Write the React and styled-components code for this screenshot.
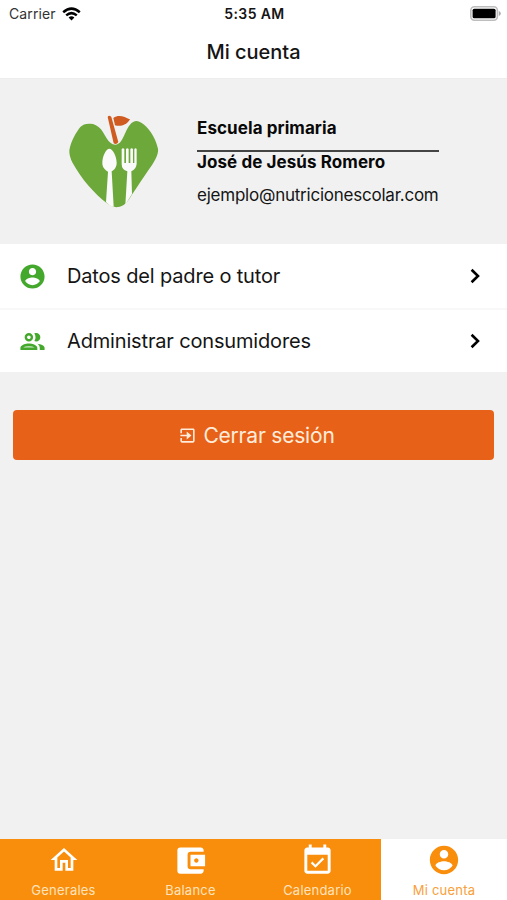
import React, { useState } from 'react';
import styled, { createGlobalStyle } from 'styled-components';
import { MdAccountBalanceWallet } from 'react-icons/md';

const GlobalStyle = createGlobalStyle`
    * {
        box-sizing: border-box;
    }

    body {
        margin: 0;
        background-color: #f1f1f1;
        font-family: Inter, "Liberation Sans", sans-serif;
        color: #151515;
    }

    button {
        border: none;
        padding: 0;
        font-family: inherit;
        color: inherit;
    }

    svg {
        display: block;
        flex-shrink: 0;
    }
`

const StyledScreen = styled.div`
    width: 507px;
    height: 900px;
    display: flex;
    flex-direction: column;
    overflow: hidden;
`

const StyledHeader = styled.header`
    height: 79px;
    background-color: white;
    border-bottom: 1px solid #ededed;
`

const StyledStatusBar = styled.div`
    height: 27px;
    padding: 0 6px 0 9px;
    display: grid;
    grid-template-columns: 1fr auto 1fr;
    align-items: center;
`

const StyledCarrier = styled.div`
    display: flex;
    align-items: center;
    gap: 6px;
    font-size: 14px;
    letter-spacing: 0.1px;
    color: #333;
`

const StyledTime = styled.div`
    padding-right: 1px;
    font-size: 14px;
    font-weight: 600;
    letter-spacing: 0.4px;
`

const StyledBattery = styled.div`
    justify-self: end;
`

const StyledTitle = styled.h1`
    margin: 0;
    line-height: 50px;
    text-align: center;
    font-size: 20px;
    font-weight: 500;
    letter-spacing: 0;
`

const StyledProfile = styled.section`
    height: 165px;
    padding: 34px 68px 0;
    display: flex;
    gap: 37px;
`

const StyledProfileInfo = styled.div`
    width: 242px;
    padding-top: 3px;
`

const StyledSchool = styled.div`
    height: 36px;
    line-height: 24px;
    border-bottom: 2px solid #444;
    font-size: 17px;
    font-weight: 700;
    letter-spacing: 0.08px;
    color: #080808;
    white-space: nowrap;
`

const StyledName = styled.div`
    line-height: 20px;
    font-size: 17px;
    font-weight: 700;
    letter-spacing: 0.08px;
    color: #080808;
    white-space: nowrap;
`

const StyledEmail = styled.div`
    margin-top: 12px;
    line-height: 22px;
    font-size: 17px;
    letter-spacing: -0.23px;
    white-space: nowrap;
`

const StyledRow = styled.button`
    width: 100%;
    height: 64px;
    padding: 0 18px 0 18px;
    display: flex;
    align-items: center;
    background-color: white;
    text-align: left;
    font-size: 20px;

    & + & {
        border-top: 2px solid #f8f8f8;
    }
`

const StyledRowIcon = styled.span`
    width: 49px;
    color: #43a82c;
`

const StyledRowLabel = styled.span`
    flex: 1;
    letter-spacing: -0.16px;
`

const StyledLogout = styled.button`
    height: 50px;
    margin: 38px 13px 0;
    padding: 1px 0 0 6px;
    display: flex;
    align-items: center;
    justify-content: center;
    gap: 6px;
    border-radius: 4px;
    background-color: #e76218;
    color: #ffecda;
    font-size: 21px;
    letter-spacing: -0.2px;
`

const StyledTabs = styled.nav`
    height: 61px;
    margin-top: auto;
    display: grid;
    grid-template-columns: 127px 127px 127px 126px;
`

const StyledTab = styled.button`
    display: flex;
    flex-direction: column;
    align-items: center;
    background-color: ${({ $active }) => ($active ? 'white' : '#f98e0c')};
    color: ${({ $active }) => ($active ? '#f98e0c' : 'white')};
`

const StyledTabIcon = styled.span`
    height: 42px;
    display: flex;
    align-items: center;
`

const StyledTabLabel = styled.span`
    line-height: 18px;
    font-size: 13px;
    letter-spacing: 0.22px;
    color: ${({ $active }) => ($active ? '#f9a03b' : '#ffe3bd')};
`

function Glyph({ size, children }) {
    return (
        <svg width={size} height={size} viewBox="0 0 24 24" fill="currentColor">
            {children}
        </svg>
    );
}

function AccountIcon({ size }) {
    return (
        <Glyph size={size}>
            <path d="M12 2C6.48 2 2 6.48 2 12s4.48 10 10 10 10-4.48 10-10S17.52 2 12 2zm0 3c1.66 0 3 1.34 3 3s-1.34 3-3 3-3-1.34-3-3 1.34-3 3-3zm0 14.2c-2.5 0-4.71-1.28-6-3.22.03-1.99 4-3.08 6-3.08 1.99 0 5.97 1.09 6 3.08-1.29 1.94-3.5 3.22-6 3.22z" />
        </Glyph>
    );
}

function PeopleIcon({ size }) {
    return (
        <Glyph size={size}>
            <path opacity=".4" d="M4.34 17h9.32c-.84-.58-2.87-1.25-4.66-1.25s-3.82.67-4.66 1.25z" />
            <path d="M9 13.75c-2.34 0-7 1.17-7 3.5V19h14v-1.75c0-2.33-4.66-3.5-7-3.5zM4.34 17c.84-.58 2.87-1.25 4.66-1.25s3.82.67 4.66 1.25H4.34zM9 12c1.93 0 3.5-1.57 3.5-3.5S10.93 5 9 5 5.5 6.57 5.5 8.5 7.07 12 9 12zm0-5c.83 0 1.5.67 1.5 1.5S9.83 10 9 10s-1.5-.67-1.5-1.5S8.17 7 9 7zm7.04 6.81c1.16.84 1.96 1.96 1.96 3.44V19h4v-1.75c0-2.02-3.5-3.17-5.96-3.44zM15 12c1.93 0 3.5-1.57 3.5-3.5S16.93 5 15 5c-.54 0-1.04.13-1.5.35.63.89 1 1.98 1 3.15s-.37 2.26-1 3.15c.46.22.96.35 1.5.35z" />
        </Glyph>
    );
}

function ChevronIcon() {
    return (
        <svg width="28" height="28" viewBox="0 0 28 28" fill="none" stroke="#000" strokeWidth="2.6">
            <path d="M10.6 7.7L17 14L10.6 20.3" />
        </svg>
    );
}

function ExitIcon({ size }) {
    return (
        <Glyph size={size}>
            <path d="M11 17l6-5-6-5v4H3v2h8v4zM19 3H5c-1.11 0-2 .9-2 2v4h2V5h14v14H5v-4H3v4c0 1.1.89 2 2 2h14c1.1 0 2-.9 2-2V5c0-1.1-.9-2-2-2z" />
        </Glyph>
    );
}

function HomeIcon({ size }) {
    return (
        <Glyph size={size}>
            <path d="M12 5.69l5 4.5V18h-2v-6H9v6H7v-7.81l5-4.5M12 3L2 12h3v8h6v-6h2v6h6v-8h3L12 3z" />
        </Glyph>
    );
}

function CalendarIcon({ size }) {
    return (
        <Glyph size={size}>
            <path d="M16.53 11.06L15.47 10l-4.88 4.88-2.12-2.12-1.06 1.06L10.59 17l5.94-5.94zM19 3h-1V1h-2v2H8V1H6v2H5c-1.11 0-1.99.9-1.99 2L3 19c0 1.1.89 2 2 2h14c1.1 0 2-.9 2-2V5c0-1.1-.9-2-2-2zm0 16H5V8h14v11z" />
        </Glyph>
    );
}

function WifiIcon() {
    return (
        <svg width="19" height="14" viewBox="0 0 19 14" fill="none" stroke="#000" strokeWidth="2.5">
            <path d="M1.2 5.2Q9.5 -2 17.8 5.2" />
            <path d="M4.2 8.4Q9.5 3.9 14.8 8.4" />
            <path d="M6.6 10.4Q9.5 8.2 12.4 10.4L9.5 13.6Z" fill="#000" stroke="none" />
        </svg>
    );
}

function BatteryIcon() {
    return (
        <svg width="31" height="15" viewBox="0 0 31 15">
            <rect x="0.8" y="0.8" width="26.6" height="13.4" rx="3.6" fill="#fff" stroke="#bdbdbd" strokeWidth="1.6" />
            <rect x="2.6" y="2.7" width="23" height="9.6" rx="1.6" fill="#000" />
            <path d="M28.8 5q2 .6 2 2.5t-2 2.5z" fill="#aaa" />
        </svg>
    );
}

function SchoolLogo() {
    return (
        <svg width="92" height="96" viewBox="25 24 276 288">
            <path d="M29 136C34 106 50 82 62 66Q72 55 91 56Q110 56 124 73C137 89 146 119 167 119C190 118 194 78 211 59Q226 41 245 53C265 66 286 92 295 131C298 148 282 174 266 196C249 220 236 242 216 270C207 285 198 302 180 305Q161 310 145 297C103 266 65 221 39 174Q28 154 29 136Z" fill="#6da83b" />
            <path d="M144 36Q148 29 155 36L176 111Q171 120 162 115Z" fill="#cf5b20" />
            <path d="M161 39C177 27 194 35 211 43C200 62 181 65 166 61Z" fill="#cf5b20" />
            <path d="M149 131C159 131 171 153 171 173C171 187 164 194 156 199L162 305Q151 305 139 291L145 200C136 195 128 187 128 174C128 154 139 131 149 131Z" fill="#fafafa" />
            <path d="M186 132Q190 127 194 132V174H199V132Q203 127 207 132V174H212V132Q216 127 220 132V174H224V132Q228 127 231 132V176Q230 192 215 199L217 267L197 299L203 199Q186 194 186 177Z" fill="#fafafa" />
        </svg>
    );
}

const rows = [
    { label: 'Datos del padre o tutor', icon: <AccountIcon size={29} /> },
    { label: 'Administrar consumidores', icon: <PeopleIcon size={29} /> },
];

const tabs = [
    { label: 'Generales', icon: <HomeIcon size={32} /> },
    { label: 'Balance', icon: <MdAccountBalanceWallet size={35} /> },
    { label: 'Calendario', icon: <CalendarIcon size={35} /> },
    { label: 'Mi cuenta', icon: <AccountIcon size={34} /> },
];

export default function App() {

    const [activeTab, setActiveTab] = useState(3);

    return (
        <StyledScreen>
            <GlobalStyle />
            <StyledHeader>
                <StyledStatusBar>
                    <StyledCarrier>
                        Carrier
                        <WifiIcon />
                    </StyledCarrier>
                    <StyledTime>5:35 AM</StyledTime>
                    <StyledBattery>
                        <BatteryIcon />
                    </StyledBattery>
                </StyledStatusBar>
                <StyledTitle>Mi cuenta</StyledTitle>
            </StyledHeader>
            <StyledProfile>
                <SchoolLogo />
                <StyledProfileInfo>
                    <StyledSchool>Escuela primaria</StyledSchool>
                    <StyledName>José de Jesús Romero</StyledName>
                    <StyledEmail>ejemplo@nutricionescolar.com</StyledEmail>
                </StyledProfileInfo>
            </StyledProfile>
            {rows.map((row) => (
                <StyledRow key={row.label}>
                    <StyledRowIcon>{row.icon}</StyledRowIcon>
                    <StyledRowLabel>{row.label}</StyledRowLabel>
                    <ChevronIcon />
                </StyledRow>
            ))}
            <StyledLogout>
                <ExitIcon size={19} />
                Cerrar sesión
            </StyledLogout>
            <StyledTabs>
                {tabs.map((tab, index) => (
                    <StyledTab key={tab.label} $active={index === activeTab} onClick={() => setActiveTab(index)}>
                        <StyledTabIcon>{tab.icon}</StyledTabIcon>
                        <StyledTabLabel $active={index === activeTab}>{tab.label}</StyledTabLabel>
                    </StyledTab>
                ))}
            </StyledTabs>
        </StyledScreen>
    );
}
